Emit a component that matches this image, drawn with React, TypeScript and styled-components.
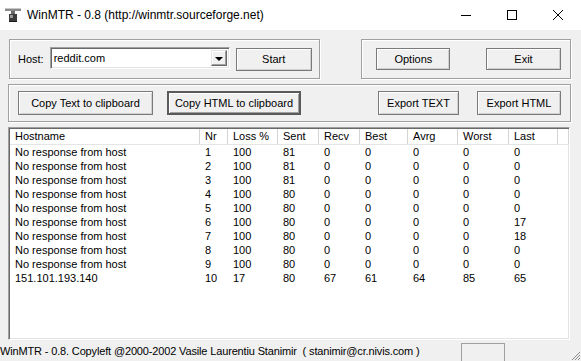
import styled, { createGlobalStyle, css } from 'styled-components'

const GlobalStyle = createGlobalStyle`
  html, body {
    margin: 0;
    padding: 0;
    background: #f0f0f0;
    overflow: hidden;
  }
`

const Window = styled.div`
  width: 581px;
  height: 361px;
  display: flex;
  flex-direction: column;
  background: #f0f0f0;
  font-family: 'Liberation Sans', Arial, sans-serif;
  font-size: 11px;
  color: #000;
  overflow: hidden;
`

const TitleBar = styled.div`
  height: 30px;
  flex: none;
  background: #fff;
  display: flex;
  align-items: center;
`

const TitleIcon = styled.div`
  width: 16px;
  height: 16px;
  margin: 0 6px 0 5px;
  display: flex;
`

const TitleText = styled.div`
  flex: 1;
  font-size: 12px;
  color: #000;
  white-space: nowrap;
`

const WinButton = styled.div`
  width: 46px;
  height: 30px;
  flex: none;
  display: flex;
  align-items: center;
  justify-content: center;
`

const Body = styled.div`
  flex: 1;
  display: flex;
  flex-direction: column;
  padding: 9px 10px 0 8px;
  min-height: 0;
`

const TopRow = styled.div`
  display: flex;
  gap: 41px;
  padding-left: 1px;
`

const Group = styled.div<{ $w?: number; $h: number }>`
  ${(p) => (p.$w ? css`width: ${p.$w}px;` : css`flex: 1;`)}
  height: ${(p) => p.$h}px;
  box-sizing: border-box;
  border: 1px solid #a0a0a0;
  box-shadow: inset 1px 1px 0 #fff, 1px 1px 0 #fff;
  display: flex;
  align-items: center;
`

const Label = styled.span`
  margin: 0 6px 0 8px;
`

const Combo = styled.div`
  width: 180px;
  height: 22px;
  box-sizing: border-box;
  background: #fff;
  border-top: 1px solid #a0a0a0;
  border-left: 1px solid #a0a0a0;
  border-right: 1px solid #fff;
  border-bottom: 1px solid #fff;
  box-shadow: inset 1px 1px 0 #696969, inset -1px -1px 0 #e3e3e3;
  display: flex;
  align-items: stretch;
  padding: 2px;
  margin-top: -2px;
`

const ComboText = styled.div`
  flex: 1;
  line-height: 16px;
  padding-left: 1px;
`

const ComboArrow = styled.div`
  width: 16px;
  box-sizing: border-box;
  background: #f0f0f0;
  border-top: 1px solid #e3e3e3;
  border-left: 1px solid #e3e3e3;
  border-right: 1px solid #696969;
  border-bottom: 1px solid #696969;
  box-shadow: inset -1px -1px 0 #a0a0a0, inset 1px 1px 0 #fff;
  display: flex;
  align-items: center;
  justify-content: center;
  &::after {
    content: '';
    border-left: 4px solid transparent;
    border-right: 4px solid transparent;
    border-top: 4px solid #000;
    margin-top: 1px;
  }
`

const Button = styled.div<{ $w: number; $h?: number; $default?: boolean }>`
  width: ${(p) => p.$w}px;
  height: ${(p) => p.$h ?? 23}px;
  box-sizing: border-box;
  flex: none;
  background: #f0f0f0;
  border: 1px solid #7a7a7a;
  box-shadow: inset 1px 1px 0 #fff, inset -1px -1px 0 #d0d0d0;
  display: flex;
  align-items: center;
  justify-content: center;
  white-space: nowrap;
  ${(p) =>
    p.$default &&
    css`
      border: 2px solid #5a5a5a;
      box-shadow: inset 1px 1px 0 #fff, inset -1px -1px 0 #a0a0a0;
    `}
`

const Spacer = styled.div`
  flex: 1;
`

const ListBox = styled.div`
  flex: none;
  height: 213px;
  margin-top: 5px;
  box-sizing: border-box;
  background: #fff;
  border-top: 1px solid #a0a0a0;
  border-left: 1px solid #a0a0a0;
  border-right: 1px solid #fff;
  border-bottom: 1px solid #fff;
  box-shadow: inset 1px 1px 0 #696969, inset -1px -1px 0 #e3e3e3;
  padding: 1px 0 0 1px;
  margin-right: 1px;
`

const cols = '190px 28px 50px 41px 41px 48px 50px 51px 49px 1fr'

const HeaderRow = styled.div`
  display: grid;
  grid-template-columns: ${cols};
  height: 16px;
`

const HeaderCell = styled.div`
  border-right: 1px solid #d5d5d5;
  border-bottom: 1px solid #e5e5e5;
  padding-left: 5px;
  line-height: 15px;
  white-space: nowrap;
  overflow: hidden;
`

const Row = styled.div`
  display: grid;
  grid-template-columns: ${cols};
  height: 14px;
  line-height: 14px;
`

const Cell = styled.div`
  padding-left: 5px;
  white-space: nowrap;
  overflow: hidden;
`

const StatusBar = styled.div`
  height: 21px;
  flex: none;
  margin-top: auto;
  display: flex;
  align-items: center;
  font-size: 11px;
`

const StatusText = styled.div`
  width: 461px;
  flex: none;
  white-space: nowrap;
  overflow: hidden;
  letter-spacing: -0.15px;
`

const StatusPanel = styled.div`
  width: 44px;
  height: 19px;
  margin-top: 3px;
  box-sizing: border-box;
  border-top: 1px solid #a0a0a0;
  border-left: 1px solid #a0a0a0;
  border-right: 1px solid #a0a0a0;
`

const Grip = styled.div`
  flex: 1;
  align-self: stretch;
  display: flex;
  align-items: flex-end;
  justify-content: flex-end;
`

const headers = ['Hostname', 'Nr', 'Loss %', 'Sent', 'Recv', 'Best', 'Avrg', 'Worst', 'Last', '']

const rows = [
  ['No response from host', '1', '100', '81', '0', '0', '0', '0', '0'],
  ['No response from host', '2', '100', '81', '0', '0', '0', '0', '0'],
  ['No response from host', '3', '100', '81', '0', '0', '0', '0', '0'],
  ['No response from host', '4', '100', '80', '0', '0', '0', '0', '0'],
  ['No response from host', '5', '100', '80', '0', '0', '0', '0', '0'],
  ['No response from host', '6', '100', '80', '0', '0', '0', '0', '17'],
  ['No response from host', '7', '100', '80', '0', '0', '0', '0', '18'],
  ['No response from host', '8', '100', '80', '0', '0', '0', '0', '0'],
  ['No response from host', '9', '100', '80', '0', '0', '0', '0', '0'],
  ['151.101.193.140', '10', '17', '80', '67', '61', '64', '85', '65'],
]

const App = () => {
  return (
    <Window>
      <GlobalStyle />
      <TitleBar>
        <TitleIcon>
          <svg width="16" height="16" viewBox="0 0 16 16">
            <rect x="0" y="1" width="16" height="3" fill="#8a8a8a" />
            <rect x="0" y="1" width="16" height="1" fill="#c8c8c8" />
            <rect x="6" y="4" width="4" height="3" fill="#6a6a6a" />
            <rect x="4" y="7" width="8" height="8" fill="#3c3c3c" />
            <rect x="5" y="8" width="3" height="3" fill="#9a9a9a" />
            <rect x="4" y="14" width="8" height="1" fill="#1a1a1a" />
          </svg>
        </TitleIcon>
        <TitleText>WinMTR - 0.8 (http://winmtr.sourceforge.net)</TitleText>
        <WinButton>
          <svg width="10" height="10" viewBox="0 0 10 10">
            <rect x="0" y="5" width="10" height="1" fill="#000" />
          </svg>
        </WinButton>
        <WinButton>
          <svg width="10" height="10" viewBox="0 0 10 10">
            <rect x="0.5" y="0.5" width="9" height="9" fill="none" stroke="#000" />
          </svg>
        </WinButton>
        <WinButton>
          <svg width="10" height="10" viewBox="0 0 10 10">
            <path d="M0 0 L10 10 M10 0 L0 10" stroke="#000" strokeWidth="1" />
          </svg>
        </WinButton>
      </TitleBar>
      <Body>
        <TopRow>
          <Group $w={312} $h={40}>
            <Label>Host:</Label>
            <Combo>
              <ComboText>reddit.com</ComboText>
              <ComboArrow />
            </Combo>
            <Button $w={76} style={{ marginLeft: 6 }}>
              Start
            </Button>
          </Group>
          <Group $w={210} $h={40}>
            <Button $w={74} $h={22} style={{ marginLeft: 14 }}>
              Options
            </Button>
            <Spacer />
            <Button $w={75} $h={22} style={{ marginRight: 9 }}>
              Exit
            </Button>
          </Group>
        </TopRow>
        <Group $h={38} style={{ marginTop: 5 }}>
          <Button $w={135} $h={24} style={{ marginLeft: 9 }}>
            Copy Text to clipboard
          </Button>
          <Button $w={134} $h={24} $default style={{ marginLeft: 14 }}>
            Copy HTML to clipboard
          </Button>
          <Spacer />
          <Button $w={81} $h={24}>
            Export TEXT
          </Button>
          <Button $w={84} $h={24} style={{ margin: '0 9px 0 18px' }}>
            Export HTML
          </Button>
        </Group>
        <ListBox>
          <HeaderRow>
            {headers.map((h, i) => (
              <HeaderCell key={i}>{h}</HeaderCell>
            ))}
          </HeaderRow>
          {rows.map((r, i) => (
            <Row key={i}>
              {r.map((c, j) => (
                <Cell key={j}>{c}</Cell>
              ))}
            </Row>
          ))}
        </ListBox>
      </Body>
      <StatusBar>
        <StatusText>
          WinMTR - 0.8. Copyleft @2000-2002 Vasile Laurentiu Stanimir&nbsp;&nbsp;( stanimir@cr.nivis.com )
        </StatusText>
        <StatusPanel />
        <Grip>
          <svg width="12" height="12" viewBox="0 0 12 12">
            <path d="M11 3 L3 11 M11 6 L6 11 M11 9 L9 11" stroke="#8a8a8a" strokeWidth="1" />
          </svg>
        </Grip>
      </StatusBar>
    </Window>
  )
}

export default App
